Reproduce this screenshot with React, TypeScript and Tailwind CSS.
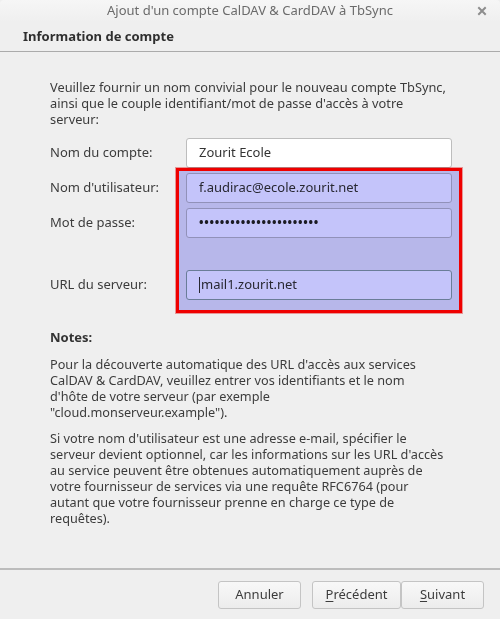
import React from "react";

const font = { fontFamily: '"Noto Sans", "DejaVu Sans", sans-serif' };

function Field({ value, focused, caret }: { value: React.ReactNode; focused?: boolean; caret?: boolean }) {
  return (
    <div
      className={`h-[30px] w-[266px] rounded-[3px] border bg-white pl-[12px] flex items-center text-[13px] text-[#333] ${
        focused ? "border-[#8aa39b]" : "border-[#bdbdbd]"
      }`}
    >
      {caret && <span className="inline-block h-[16px] w-px bg-[#333] mr-[1px]" />}
      {value}
    </div>
  );
}

function Row({ label, children, className = "" }: { label: string; children: React.ReactNode; className?: string }) {
  return (
    <div className={`flex items-center ${className}`}>
      <div className="w-[136px] text-[13px] text-[#3c3c3c]">{label}</div>
      {children}
    </div>
  );
}

function Btn({ children, w }: { children: React.ReactNode; w: string }) {
  return (
    <div
      className={`${w} h-[28px] rounded-[3px] border border-[#c4c4c4] bg-gradient-to-b from-[#f8f8f8] to-[#ececec] flex items-center justify-center text-[13px] text-[#3c3c3c]`}
    >
      {children}
    </div>
  );
}

export default function App() {
  return (
    <div style={font} className="w-[500px] h-[619px] bg-[#efefef] flex flex-col text-[#3c3c3c] overflow-hidden">
      {/* title bar */}
      <div className="h-[22px] shrink-0 bg-gradient-to-b from-[#f6f6f6] to-[#efefef] flex items-center rounded-t-[4px]">
        <div className="w-[36px]" />
        <div className="flex-1 text-center text-[13px] text-[#6b6b6b]">Ajout d'un compte CalDAV &amp; CardDAV à TbSync</div>
        <div className="w-[36px] flex justify-center">
          <svg width="10" height="10" viewBox="0 0 10 10">
            <path d="M2 2 L8 8 M8 2 L2 8" stroke="#8d8d8d" strokeWidth="2" strokeLinecap="square" />
          </svg>
        </div>
      </div>
      {/* header */}
      <div className="h-[30px] shrink-0 pl-[23px] flex items-center border-b border-[#ababab]">
        <span className="text-[13px] font-bold text-[#2f2f2f]">Information de compte</span>
      </div>

      {/* content */}
      <div className="flex-1 pl-[50px] pt-[27px]">
        <div className="text-[12.8px] leading-[16px] whitespace-nowrap">
          <div>Veuillez fournir un nom convivial pour le nouveau compte TbSync,</div>
          <div>ainsi que le couple identifiant/mot de passe d'accès à votre</div>
          <div>serveur:</div>
        </div>

        <div className="relative mt-[11px]">
          <Row label="Nom du compte:">
            <Field value="Zourit Ecole" />
          </Row>
          <Row label="Nom d'utilisateur:" className="mt-[5px]">
            <Field value="f.audirac@ecole.zourit.net" />
          </Row>
          <Row label="Mot de passe:" className="mt-[5px]">
            <Field value={<span className="text-[12px] tracking-[0.7px] font-bold text-[#222]">•••••••••••••••••••••••</span>} />
          </Row>
          <Row label="URL du serveur:" className="mt-[32px]">
            <Field value="mail1.zourit.net" focused caret />
          </Row>
          {/* annotation overlay */}
          <div className="pointer-events-none absolute left-[126px] top-[30px] w-[286px] h-[145px] border-[3px] border-[#ff0000] outline outline-1 outline-[#f7a0a0] bg-[#c4c4fa] mix-blend-multiply" />
        </div>

        <div className="mt-[28px] text-[13px] font-bold text-[#333]">Notes:</div>
        <div className="mt-[8px] text-[12.7px] leading-[16px] whitespace-nowrap">
          <div>Pour la découverte automatique des URL d'accès aux services</div>
          <div>CalDAV &amp; CardDAV, veuillez entrer vos identifiants et le nom</div>
          <div>d'hôte de votre serveur (par exemple</div>
          <div>"cloud.monserveur.example").</div>
        </div>
        <div className="mt-[10px] text-[12.7px] leading-[16px] whitespace-nowrap">
          <div>Si votre nom d'utilisateur est une adresse e-mail, spécifier le</div>
          <div>serveur devient optionnel, car les informations sur les URL d'accès</div>
          <div>au service peuvent être obtenues automatiquement auprès de</div>
          <div>votre fournisseur de services via une requête RFC6764 (pour</div>
          <div>autant que votre fournisseur prenne en charge ce type de</div>
          <div>requêtes).</div>
        </div>
      </div>

      {/* footer */}
      <div className="shrink-0 border-t-2 border-[#bcbcbc] h-[51px] flex items-start justify-end pr-[16px] pt-[11px]">
        <Btn w="w-[83px]">Annuler</Btn>
        <div className="w-[11px]" />
        <Btn w="w-[89px]">
          <span className="underline underline-offset-2">P</span>récédent
        </Btn>
        <Btn w="w-[83px]">
          <span className="underline underline-offset-2">S</span>uivant
        </Btn>
      </div>
    </div>
  );
}
